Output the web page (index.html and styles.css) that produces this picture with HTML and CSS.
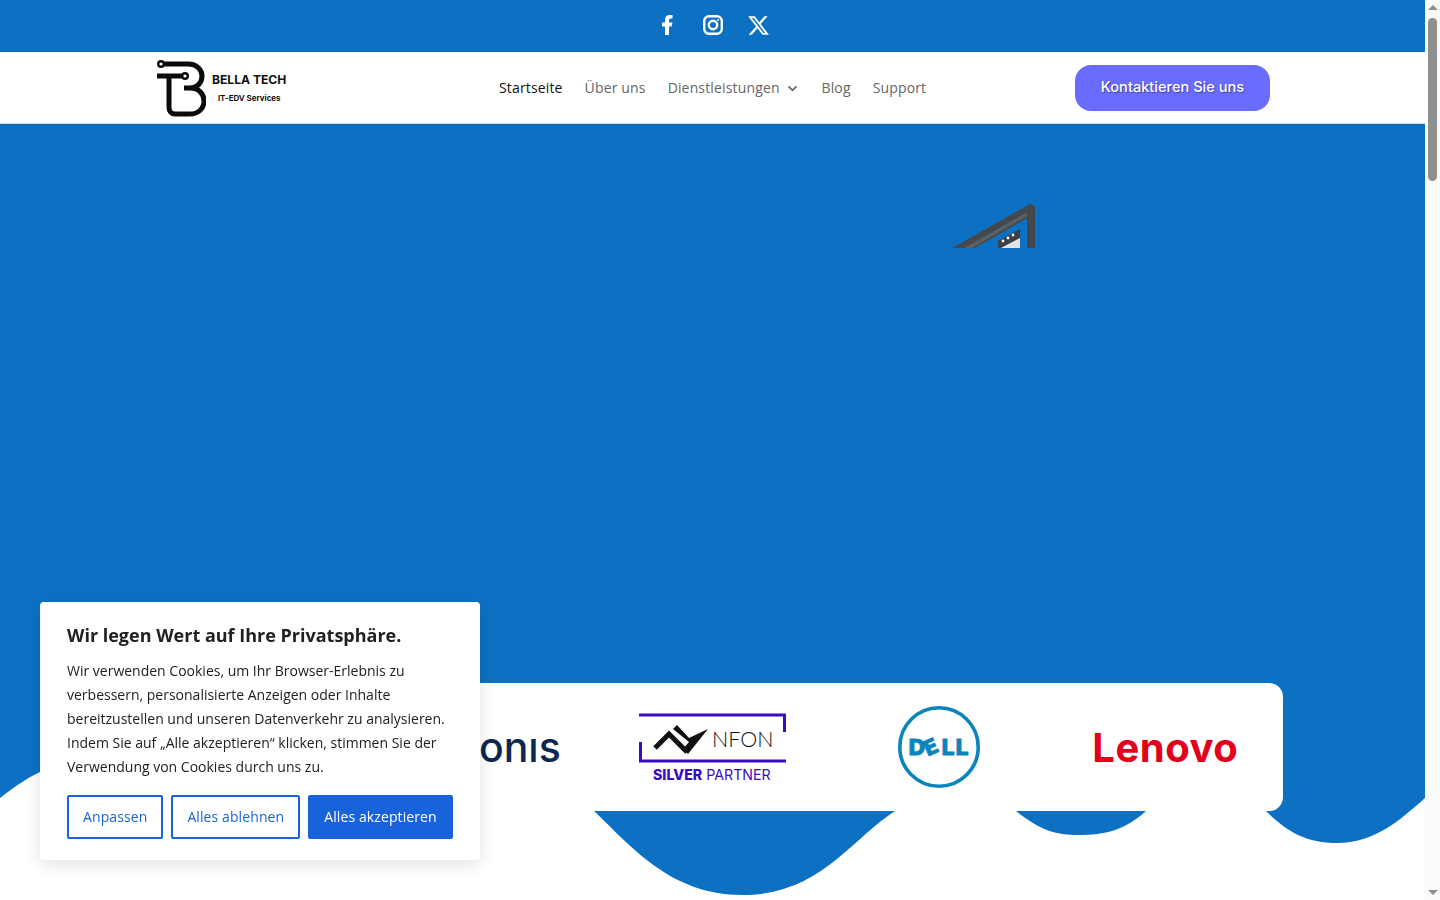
FILE: index.html
```html
<!DOCTYPE html>
<html lang="de">
<head>
    <meta charset="UTF-8">
    <meta name="viewport" content="width=device-width, initial-scale=1.0">
    <title>Bella Tech - IT-EDV Services</title>
    <link rel="stylesheet" href="styles.css">
</head>
<body>
<div class="page">
    <div class="top-bar">
        <a href="#" class="social-link" aria-label="Facebook">
            <svg viewBox="0 0 24 24" width="24" height="24"><path fill="#fff" d="M14 13.5h2.5l1-4H14v-2c0-1.03 0-2 2-2h1.5V2.14c-.326-.043-1.557-.14-2.857-.14C11.928 2 10 3.657 10 6.7v2.8H7v4h3V22h4z"/></svg>
        </a>
        <a href="#" class="social-link" aria-label="Instagram">
            <svg viewBox="0 0 24 24" width="24" height="24" fill="none" stroke="#fff" stroke-width="2.4"><rect x="3.2" y="3.2" width="17.6" height="17.6" rx="5"/><circle cx="12" cy="12" r="4.2"/><circle cx="17" cy="7" r="1" fill="#fff" stroke="none"/></svg>
        </a>
        <a href="#" class="social-link" aria-label="X">
            <svg viewBox="0 0 512 512" width="23" height="23"><path fill="#fff" d="M389.2 48h70.6L305.6 224.2 487 464H345L233.7 318.6 106.5 464H35.8L200.7 275.5 26.8 48H172.4L272.9 180.9 389.2 48zM364.4 421.8h39.1L151.1 88h-42L364.4 421.8z"/></svg>
        </a>
    </div>

    <header class="site-header">
        <a href="#" class="logo">
            <svg class="logo-mark" viewBox="157 60 49 57" width="49" height="57" fill="none" stroke="#0b0b0b" stroke-width="5">
                <path d="M163 64H188C197 64 202 70 202 76C202 83 197 88 190 88H184M190 88C199 88 204 94 204 101C204 109 198 114 190 114H175C171 114 169 111 169 107V76"/>
                <path d="M157 76H183"/>
                <circle cx="161" cy="64" r="2.8" fill="#fff" stroke-width="2.4"/>
                <circle cx="185" cy="76" r="2.8" fill="#fff" stroke-width="2.4"/>
            </svg>
            <span class="logo-text">
                <span class="logo-name">BELLA TECH</span>
                <span class="logo-sub">IT-EDV Services</span>
            </span>
        </a>
        <nav class="main-nav">
            <a href="#" class="nav-link active">Startseite</a>
            <a href="#" class="nav-link">Über uns</a>
            <a href="#" class="nav-link has-sub">Dienstleistungen
                <svg viewBox="0 0 12 8" width="11" height="7" fill="none" stroke="#666" stroke-width="2"><path d="M1.5 1.5L6 6l4.5-4.5"/></svg>
            </a>
            <a href="#" class="nav-link">Blog</a>
            <a href="#" class="nav-link">Support</a>
        </nav>
        <a href="#" class="btn-contact">Kontaktieren Sie uns</a>
    </header>

    <section class="hero">
        <svg class="hero-image" viewBox="950 200 90 50" width="90" height="50">
            <path fill="#44484d" d="M952 248L1030 204L1035 206V248H1027V218L975 248Z"/>
            <path fill="#5a5f64" d="M964 248L1027 212V216L972 248Z"/>
            <path fill="#3d4146" d="M998 248V241L1020 229V248Z"/>
            <path fill="#dfe5e8" d="M1001 248L1020 238V248Z"/>
            <circle cx="1003" cy="241" r="1.4" fill="#fff"/>
            <circle cx="1008" cy="238" r="1.4" fill="#fff"/>
            <circle cx="1013" cy="235" r="1.4" fill="#fff"/>
        </svg>

        <svg class="wave" viewBox="0 680 1425 220" width="1425" height="220">
            <path fill="#fff" d="M0 798C14 787 27 778 40 772C80 752 120 745 160 745V811H594C630 845 670 895 742 895C820 895 850 840 895 811H1016C1040 830 1055 835 1079 835C1105 835 1125 830 1146 811H1266C1285 830 1305 843 1337 843C1375 843 1400 820 1425 798V900H0Z"/>
        </svg>

        <div class="partners">
            <div class="partner partner-second">
                <span class="acronis">Acronıs</span>
            </div>
            <div class="partner">
                <svg viewBox="0 0 147 70" width="147" height="70">
                    <path fill="none" stroke="#3a0cc0" stroke-width="3" d="M145.5 20V3H0M1.5 30V49H147"/>
                    <path fill="none" stroke="#111" stroke-width="5" d="M16 36L30 22L48 40"/>
                    <path fill="#111" d="M34 17L38 13L50 26L69 17L49 42L44 37L50 30Z"/>
                    <text class="nfon-name" x="73" y="34.5">NFON</text>
                    <text class="nfon-tier" x="14" y="68"><tspan class="nfon-silver">SILVER</tspan> PARTNER</text>
                </svg>
            </div>
            <div class="partner">
                <svg viewBox="0 0 84 84" width="84" height="84">
                    <circle cx="42" cy="42" r="39.2" fill="none" stroke="#0b84bd" stroke-width="3.6"/>
                    <text class="dell-mark" x="11" y="50">D</text>
                    <text class="dell-mark" x="27" y="50" transform="rotate(-24 33 43)">E</text>
                    <text class="dell-mark" x="44" y="50">L</text>
                    <text class="dell-mark" x="58" y="50">L</text>
                </svg>
            </div>
            <div class="partner">
                <span class="lenovo">Lenovo</span>
            </div>
        </div>
    </section>
</div>

<aside class="scrollbar">
    <span class="arrow-up"></span>
    <span class="thumb"></span>
    <span class="arrow-down"></span>
</aside>

<div class="cookie-box">
    <h3>Wir legen Wert auf Ihre Privatsphäre.</h3>
    <p>Wir verwenden Cookies, um Ihr Browser-Erlebnis zu verbessern, personalisierte Anzeigen oder Inhalte bereitzustellen und unseren Datenverkehr zu analysieren. Indem Sie auf „Alle akzeptieren“ klicken, stimmen Sie der Verwendung von Cookies durch uns zu.</p>
    <div class="cookie-actions">
        <button class="cookie-btn" type="button">Anpassen</button>
        <button class="cookie-btn" type="button">Alles ablehnen</button>
        <button class="cookie-btn primary" type="button">Alles akzeptieren</button>
    </div>
</div>
</body>
</html>
```

FILE: styles.css
```css
* {
    box-sizing: border-box;
}

body {
    margin: 0;
    height: 100vh;
    display: flex;
    overflow: hidden;
    font-family: 'Open Sans', sans-serif;
    background-color: #fff;
}

a {
    text-decoration: none;
}

.page {
    flex: 1;
    min-width: 0;
    display: flex;
    flex-direction: column;
}

.top-bar {
    height: 52px;
    flex-shrink: 0;
    display: flex;
    align-items: center;
    justify-content: center;
    gap: 22px;
    padding-bottom: 2px;
    background-color: #0c71c3;
}

.social-link {
    display: flex;
    width: 24px;
    height: 24px;
    align-items: center;
    justify-content: center;
}

.site-header {
    height: 72px;
    flex-shrink: 0;
    display: flex;
    align-items: center;
    padding: 0 155px 0 157px;
    background-color: #fff;
    border-bottom: 1px solid #d5d5d5;
}

.logo {
    display: flex;
    align-items: center;
    gap: 6px;
    width: 130px;
    color: #111;
}

.logo-mark {
    flex-shrink: 0;
    margin-top: 2px;
}

.logo-text {
    display: flex;
    flex-direction: column;
    align-items: center;
    white-space: nowrap;
    padding-top: 1px;
}

.logo-name {
    font-family: 'Inter', sans-serif;
    font-size: 12.1px;
    font-weight: 700;
    line-height: 14px;
}

.logo-sub {
    font-family: 'Inter', sans-serif;
    font-size: 7.9px;
    font-weight: 700;
    line-height: 10px;
    margin-top: 6px;
}

.main-nav {
    display: flex;
    align-items: center;
    gap: 22px;
    margin-left: 212px;
}

.nav-link {
    font-size: 14px;
    font-weight: 500;
    letter-spacing: 0.15px;
    color: #666;
    white-space: nowrap;
}

.nav-link.active {
    color: #111;
}

.nav-link.has-sub svg {
    margin: 0 1px 1px 4px;
}

.btn-contact {
    margin-left: auto;
    width: 195px;
    height: 46px;
    display: flex;
    align-items: center;
    justify-content: center;
    padding-bottom: 2px;
    border-radius: 16px;
    background-color: #6a6cff;
    color: #fff;
    font-family: 'Inter', sans-serif;
    font-size: 14.6px;
    font-weight: 500;
    text-shadow: 1px 1px 1px rgba(0, 0, 0, 0.4);
}

.hero {
    position: relative;
    flex: 1;
    display: flex;
    flex-direction: column;
    justify-content: flex-end;
    padding-bottom: 89px;
    background-color: #0c71c3;
}

.hero-image {
    position: absolute;
    left: 950px;
    top: 76px;
}

.wave {
    position: absolute;
    left: 0;
    bottom: 0;
}

.partners {
    position: relative;
    width: 1140px;
    height: 128px;
    margin: 0 auto;
    padding: 0 4px;
    display: grid;
    grid-template-columns: repeat(5, 1fr);
    align-items: center;
    justify-items: center;
    background-color: #fff;
    border-radius: 14px;
}

.partner {
    display: flex;
    align-items: center;
    justify-content: center;
}

.partner-second {
    grid-column-start: 2;
}

.acronis {
    font-family: 'Inter', sans-serif;
    font-size: 41px;
    font-weight: 500;
    color: #0d2750;
    line-height: 1;
}

.lenovo {
    font-family: 'Inter', sans-serif;
    font-size: 40px;
    font-weight: 700;
    letter-spacing: 0.5px;
    color: #e2001a;
    line-height: 1;
    padding-top: 1px;
}

.nfon-name {
    font-family: 'Lato', sans-serif;
    font-size: 21.5px;
    font-weight: 300;
    fill: #111;
}

.nfon-tier {
    font-family: 'Inter', sans-serif;
    font-size: 14.2px;
    font-weight: 400;
    fill: #3a0cc0;
}

.nfon-silver {
    font-weight: 800;
}

.dell-mark {
    font-family: 'DejaVu Sans', sans-serif;
    font-size: 21px;
    font-weight: 700;
    fill: #0b84bd;
    stroke: #0b84bd;
    stroke-width: 0.9px;
}

.scrollbar {
    width: 15px;
    flex-shrink: 0;
    display: flex;
    flex-direction: column;
    align-items: center;
    position: relative;
    background-color: #fbfbfb;
}

.arrow-up {
    margin-top: 5px;
    border-left: 5px solid transparent;
    border-right: 5px solid transparent;
    border-bottom: 5px solid #8f8f8f;
}

.thumb {
    width: 9px;
    height: 163px;
    margin-top: 8px;
    border-radius: 5px;
    background-color: #8f8f8f;
}

.arrow-down {
    margin-top: auto;
    margin-bottom: 5px;
    border-left: 5px solid transparent;
    border-right: 5px solid transparent;
    border-top: 5px solid #8f8f8f;
}

.cookie-box {
    position: fixed;
    left: 40px;
    bottom: 40px;
    width: 440px;
    height: 258px;
    padding: 21px 27px 0;
    background-color: #fff;
    border-radius: 4px;
    box-shadow: 0 4px 16px rgba(0, 0, 0, 0.12);
    color: #212121;
}

.cookie-box h3 {
    margin: 0 0 12px;
    font-size: 18px;
    font-weight: 700;
    line-height: 24px;
}

.cookie-box p {
    margin: 0 0 16px;
    font-size: 14px;
    line-height: 24px;
}

.cookie-actions {
    display: flex;
    gap: 8px;
}

.cookie-btn {
    flex-shrink: 0;
    height: 44px;
    padding: 0 14px 2px;
    border: 2px solid #1863dc;
    border-radius: 2px;
    background-color: #fff;
    color: #1863dc;
    font-family: 'Open Sans', sans-serif;
    font-size: 14px;
    letter-spacing: 0.1px;
    white-space: nowrap;
    cursor: pointer;
}

.cookie-btn.primary {
    background-color: #1863dc;
    color: #fff;
}
```
